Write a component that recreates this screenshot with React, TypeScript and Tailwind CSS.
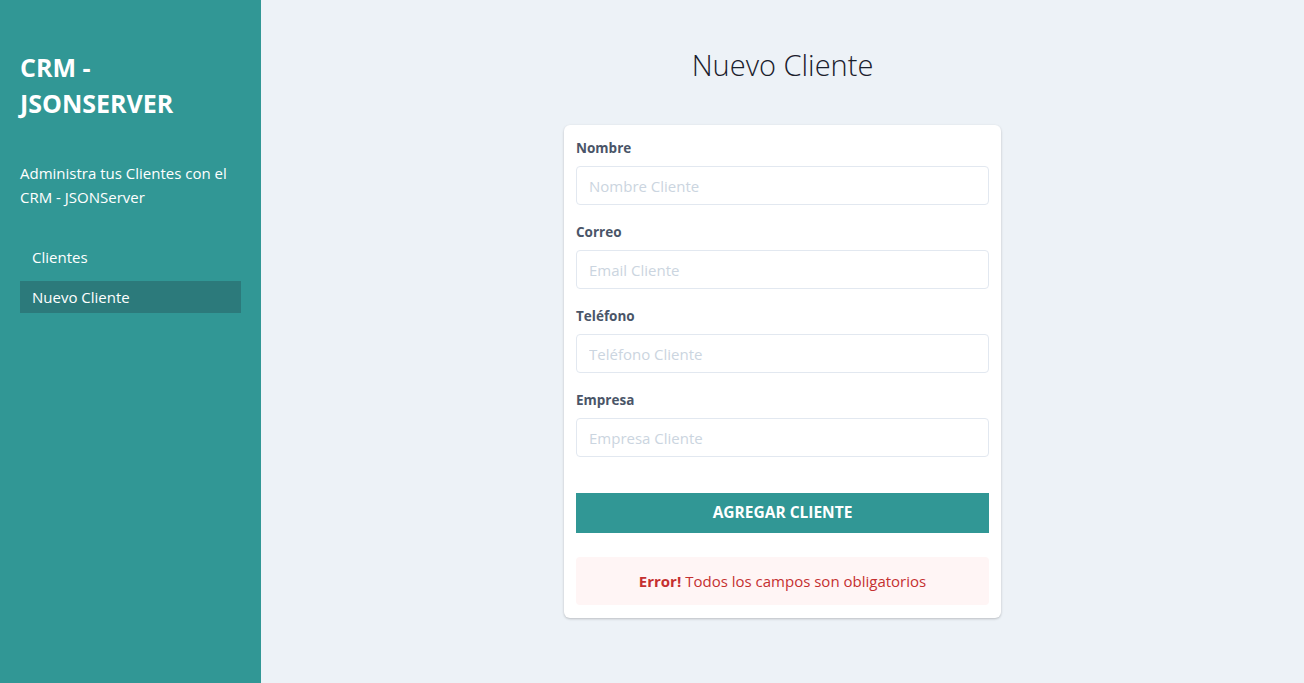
import React from "react";

const fields = [
  { label: "Nombre", placeholder: "Nombre Cliente", type: "text" },
  { label: "Correo", placeholder: "Email Cliente", type: "email" },
  { label: "Teléfono", placeholder: "Teléfono Cliente", type: "tel" },
  { label: "Empresa", placeholder: "Empresa Cliente", type: "text" },
];

export default function App() {
  return (
    <div
      className="flex min-h-screen h-[683px]"
      style={{ fontFamily: '"Open Sans", "Noto Sans", sans-serif' }}
    >
      <aside className="w-[261px] shrink-0 bg-[#319795] px-5 pt-[49px]">
        <h2 className="text-[25px] leading-[36px] font-bold text-white uppercase">
          CRM - JSONServer
        </h2>
        <p className="mt-10 text-[15px] leading-6 text-white">
          Administra tus Clientes con el CRM - JSONServer
        </p>
        <nav className="mt-8 flex flex-col gap-2">
          <a className="block px-3 py-1 text-[15px] leading-6 text-white">Clientes</a>
          <a className="block px-3 py-1 text-[15px] leading-6 text-white bg-[#2c7a7b]">
            Nuevo Cliente
          </a>
        </nav>
      </aside>
      <main className="flex-1 bg-[#edf2f7] pt-[42px]">
        <h1 className="text-center text-[29px] leading-[45px] font-light text-[#1a202c]">
          Nuevo Cliente
        </h1>
        <div className="mx-auto mt-[38px] w-[437px] rounded-md bg-white px-3 pt-[13px] pb-[13px] shadow-[0_1px_3px_0_rgba(0,0,0,0.15),0_1px_2px_0_rgba(0,0,0,0.08)]">
          <form>
            {fields.map((f) => (
              <div key={f.label} className="mb-[17px]">
                <label className="block text-[13.5px] leading-[21px] font-bold text-[#4a5568]">
                  {f.label}
                </label>
                <input
                  type={f.type}
                  placeholder={f.placeholder}
                  className="mt-[7px] block h-[39px] w-full rounded border border-[#e2e8f0] bg-white px-3 text-[15px] text-[#4a5568] placeholder:text-[#cbd5e0] outline-none"
                />
              </div>
            ))}
            <button
              type="button"
              className="mt-[36px] block h-10 w-full bg-[#319795] text-[15.5px] font-bold uppercase text-white"
            >
              Agregar Cliente
            </button>
          </form>
          <div className="mt-6 flex h-12 items-center justify-center rounded bg-[#fff5f5] text-[15px] text-[#c53030]">
            <span className="font-bold">Error!</span>
            <span className="ml-1">Todos los campos son obligatorios</span>
          </div>
        </div>
      </main>
    </div>
  );
}
